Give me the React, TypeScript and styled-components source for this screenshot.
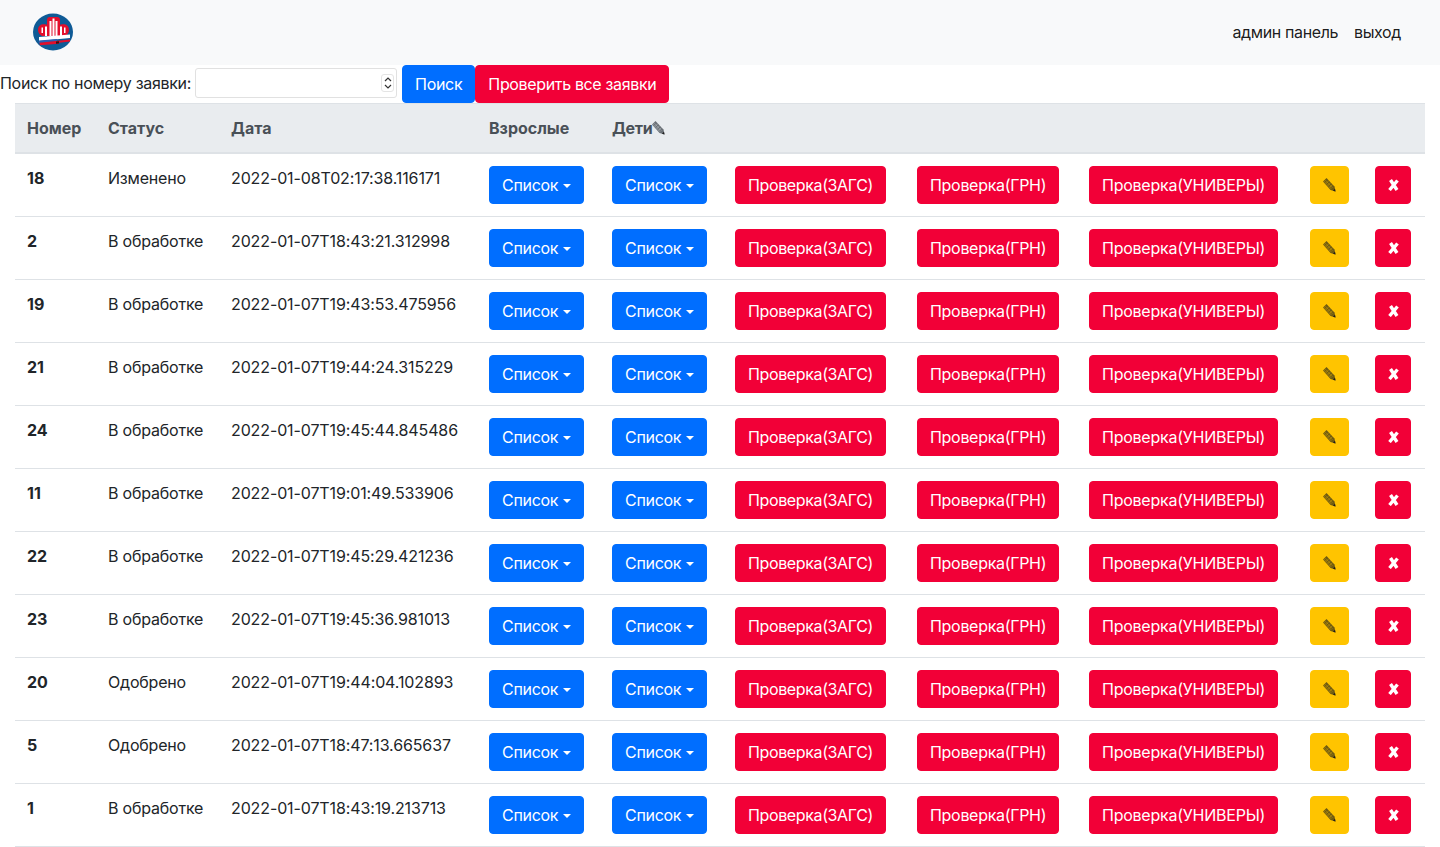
import React from "react";
import styled, { createGlobalStyle } from "styled-components";

const rows = [
  { id: 18, status: "Изменено", date: "2022-01-08T02:17:38.116171" },
  { id: 2, status: "В обработке", date: "2022-01-07T18:43:21.312998" },
  { id: 19, status: "В обработке", date: "2022-01-07T19:43:53.475956" },
  { id: 21, status: "В обработке", date: "2022-01-07T19:44:24.315229" },
  { id: 24, status: "В обработке", date: "2022-01-07T19:45:44.845486" },
  { id: 11, status: "В обработке", date: "2022-01-07T19:01:49.533906" },
  { id: 22, status: "В обработке", date: "2022-01-07T19:45:29.421236" },
  { id: 23, status: "В обработке", date: "2022-01-07T19:45:36.981013" },
  { id: 20, status: "Одобрено", date: "2022-01-07T19:44:04.102893" },
  { id: 5, status: "Одобрено", date: "2022-01-07T18:47:13.665637" },
  { id: 1, status: "В обработке", date: "2022-01-07T18:43:19.213713" },
];

const colWidths = [81, 123, 258, 123, 123, 182, 172, 221, 65, 62];

const Logo = () => (
  <svg width="42" height="40" viewBox="0 0 42 40">
    <ellipse cx="21" cy="20" rx="20" ry="18.5" fill="#0f5b96" />
    {/* crown */}
    <path d="M6 18c0-5 4-6.500 8-5.500l1 .3V8q0-3 3-3h7q3 0 3 3v4.800l1-.3c4-1 8 .5 8 5.500 0 3-2 5-4 6H10c-2-1-4-3-4-6z" fill="#e30f2c" />
    <path d="M9.500 15.500H11V21H9.500zM13 14.500h2V24h-2zM17.500 9h2v15h-2zM20.500 6.500h2V24h-2zM23.500 9h2v15h-2zM28 14.500h2V24h-2zM32 15.500h1.500V21H32z" fill="#fff" />
    {/* flag ribbon */}
    <path d="M7 25l31-2.500V26L7 29z" fill="#fff" />
    <path d="M7 28.500l18-1.500v2L7 31z" fill="#2d5fb5" />
    <path d="M7.500 30.800l30.500-3.300v2l-11 1.200v1l-19 1.500z" fill="#e30f2c" />
    <path d="M24 29.500l3-.3v2.300l-3 .3z" fill="#3a1212" />
  </svg>
);

const Spinner = () => (
  <svg width="8" height="14" viewBox="0 0 8 14" fill="none" stroke="#333" strokeWidth="1.2">
    <path d="M1 5l3-3 3 3M1 9l3 3 3-3" />
  </svg>
);

const PencilIcon = ({ color = "#6e5a12", gap = "#ffc400" }: { color?: string; gap?: string }) => (
  <svg width="13" height="14" viewBox="0 0 13 14">
    <path d="M0 3.500L3.500 0l8 8.500L12.500 13.500 7.500 12z" fill={color} />
    <path d="M2 1.800l7.500 8M.9 3l7.500 8" stroke={gap} strokeWidth=".5" opacity=".6" fill="none" />
    <path d="M3 5.500l3-3M4.800 7.500l3-3M6.600 9.500l3-3" stroke={gap} strokeWidth=".6" opacity=".6" fill="none" />
    <path d="M10 12.800l2-2 .5 2.700z" fill="#1d1d1d" />
  </svg>
);

const CrossIcon = () => (
  <svg width="11" height="12" viewBox="0 0 11 12" fill="none" stroke="#fff" strokeWidth="3.4">
    <path d="M2.500 1l6.500 10M9.500 1.500L1.500 11" />
  </svg>
);

const App: React.FC = () => (
  <>
    <GlobalStyle />
    <Navbar>
      <Brand>
        <Logo />
      </Brand>
      <NavLinks>
        <NavLink>админ панель</NavLink>
        <NavLink>выход</NavLink>
      </NavLinks>
    </Navbar>
    <SearchForm>
      <SearchLabel>Поиск по номеру заявки:</SearchLabel>
      <InputWrap>
        <SearchInput type="text" />
        <SpinBox>
          <Spinner />
        </SpinBox>
      </InputWrap>
      <Button $variant="primary">Поиск</Button>
      <Button $variant="danger" $tracking={-0.35}>
        Проверить все заявки
      </Button>
    </SearchForm>
    <TableWrap>
      <Table>
        <colgroup>
          {colWidths.map((w, i) => (
            <col key={i} style={{ width: w }} />
          ))}
        </colgroup>
        <thead>
          <tr>
            <Th>Номер</Th>
            <Th>Статус</Th>
            <Th>Дата</Th>
            <Th>Взрослые</Th>
            <Th>
              <HeadWithIcon>
                Дети
                <PencilIcon color="#6a7076" gap="#e9ecef" />
              </HeadWithIcon>
            </Th>
            <Th />
            <Th />
            <Th />
            <Th />
            <Th />
          </tr>
        </thead>
        <tbody>
          {rows.map((row) => (
            <tr key={row.id}>
              <IdCell>{row.id}</IdCell>
              <StatusCell>{row.status}</StatusCell>
              <DateCell>{row.date}</DateCell>
              <Td>
                <Button $variant="primary">
                  Список
                  <Caret />
                </Button>
              </Td>
              <Td>
                <Button $variant="primary">
                  Список
                  <Caret />
                </Button>
              </Td>
              <Td>
                <Button $variant="danger" $tracking={-0.37}>
                  Проверка(ЗАГС)
                </Button>
              </Td>
              <Td>
                <Button $variant="danger">Проверка(ГРН)</Button>
              </Td>
              <Td>
                <Button $variant="danger" $tracking={-0.24}>
                  Проверка(УНИВЕРЫ)
                </Button>
              </Td>
              <Td>
                <IconButton $variant="warning" $width={39}>
                  <PencilIcon />
                </IconButton>
              </Td>
              <Td>
                <IconButton $variant="danger" $width={36}>
                  <CrossIcon />
                </IconButton>
              </Td>
            </tr>
          ))}
        </tbody>
      </Table>
    </TableWrap>
  </>
);

export default App;

const GlobalStyle = createGlobalStyle`
  * { box-sizing: border-box; }
  html, body { margin: 0; overflow: hidden; }
  body {
    font-family: Inter, "Liberation Sans", sans-serif;
    font-size: 16px;
    line-height: 24px;
    color: #212529;
    background: #fff;
  }
`;

const Navbar = styled.nav`
  height: 65px;
  background: #f8f9fa;
  display: flex;
  align-items: center;
  justify-content: space-between;
  padding: 0 31px 0 32px;
`;

const Brand = styled.a`
  display: block;
  height: 40px;
  margin-top: -1px;
`;

const NavLinks = styled.div`
  display: flex;
  margin-top: -2px;
`;

const NavLink = styled.a`
  padding: 8px;
  color: rgba(0, 0, 0, 0.9);
  letter-spacing: -0.38px;
  cursor: pointer;
`;

const SearchForm = styled.form`
  display: flex;
  align-items: flex-start;
  height: 38px;
`;

const SearchLabel = styled.label`
  margin: 6px 4px 0 0;
  letter-spacing: -0.3px;
`;

const InputWrap = styled.div`
  position: relative;
  width: 202px;
  height: 30px;
  margin: 3px 5px 0 0;
`;

const SearchInput = styled.input`
  width: 100%;
  height: 100%;
  border: 1px solid #e1e1e1;
  border-radius: 3px;
  background: #fff;
`;

const SpinBox = styled.span`
  position: absolute;
  top: 6px;
  right: 3px;
  width: 13px;
  height: 18px;
  display: flex;
  align-items: center;
  justify-content: center;
  border: 1px solid #e4e4e4;
  border-radius: 3px;
`;

const variants = {
  primary: { bg: "#006eff", color: "#fff" },
  danger: { bg: "#f20037", color: "#fff" },
  warning: { bg: "#ffc400", color: "#212529" },
};

const Button = styled.button<{ $variant: keyof typeof variants; $tracking?: number }>`
  display: inline-block;
  height: 38px;
  padding: 6px 12px;
  border: 1px solid ${({ $variant }) => variants[$variant].bg};
  border-radius: 4px;
  background: ${({ $variant }) => variants[$variant].bg};
  color: ${({ $variant }) => variants[$variant].color};
  font-family: inherit;
  font-size: 16px;
  line-height: 24px;
  letter-spacing: ${({ $tracking = -0.3 }) => $tracking}px;
  white-space: nowrap;
  cursor: pointer;
`;

const IconButton = styled(Button)<{ $width: number }>`
  display: flex;
  align-items: center;
  justify-content: center;
  width: ${({ $width }) => $width}px;
  padding: 0;
`;

const Caret = styled.span`
  display: inline-block;
  margin-left: 5px;
  vertical-align: 3px;
  border-top: 4.8px solid #fff;
  border-right: 4.8px solid transparent;
  border-left: 4.8px solid transparent;
`;

const TableWrap = styled.div`
  padding: 0 15px;
`;

const Table = styled.table`
  width: 1410px;
  table-layout: fixed;
  border-collapse: collapse;
`;

const Th = styled.th`
  padding: 12px;
  text-align: left;
  font-weight: 700;
  white-space: nowrap;
  color: #495057;
  background: #e9ecef;
  border-top: 1px solid #dee2e6;
  border-bottom: 2px solid #dee2e6;
`;

const HeadWithIcon = styled.span`
  display: inline-flex;
  align-items: center;
  letter-spacing: -0.3px;
`;

const Td = styled.td`
  padding: 12px;
  vertical-align: top;
  white-space: nowrap;
  border-top: 1px solid #dee2e6;
  border-bottom: 1px solid #dee2e6;
`;

const IdCell = styled(Td)`
  font-weight: 700;
`;

const StatusCell = styled(Td)`
  letter-spacing: -0.2px;
`;

const DateCell = styled(Td)`
  letter-spacing: -0.12px;
`;
